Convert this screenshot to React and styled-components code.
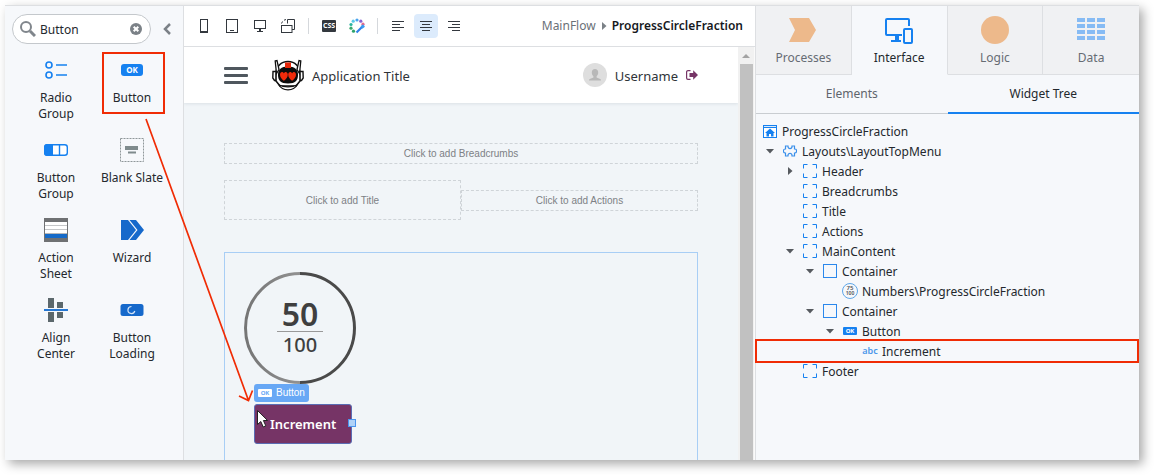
import React from "react";
import styled, { createGlobalStyle, css } from "styled-components";

const BLUE = "#1681f0";
const RED = "#f02c05";
const LINE = "#dddfe2";
const PANEL = "#f6f8fb";

const GlobalStyle = createGlobalStyle`
  *, *::before, *::after { box-sizing: border-box; }
  body {
    margin: 0;
    background: #fff;
    color: #24282d;
    font: 12px/16px "Noto Sans", sans-serif;
    overflow: hidden;
  }
  button, input { font: inherit; color: inherit; }
  button { margin: 0; padding: 0; border: 0; background: none; cursor: pointer; }
  svg { display: block; flex: none; }
`;

const Frame = styled.div`
  position: relative;
  display: flex;
  height: calc(100vh - 20px);
  margin: 5px 15px 15px 5px;
  border-top: 1px solid ${LINE};
  box-shadow: 4px 4px 10px rgba(0, 0, 0, 0.34);
`;

/* ---------- widget palette ---------- */

const Palette = styled.aside`
  flex: none;
  width: 179px;
  background: ${PANEL};
  border-right: 1px solid ${LINE};
`;

const SearchRow = styled.div`
  display: flex;
  align-items: center;
  gap: 12px;
  padding: 8px 7px;
`;

const SearchBox = styled.label`
  display: flex;
  align-items: center;
  gap: 4px;
  width: 139px;
  height: 30px;
  padding: 0 8px 0 7px;
  border: 1px solid #c4c8cc;
  border-radius: 15px;
  background: #fff;
`;

const SearchInput = styled.input`
  flex: 1;
  min-width: 0;
  padding: 2px 0 0;
  border: 0;
  outline: 0;
  background: none;
`;

const WidgetGrid = styled.div`
  display: grid;
  grid-template-columns: repeat(2, 76px);
  grid-auto-rows: 80px;
  padding: 0 13px;
`;

const Widget = styled.button`
  position: relative;
  display: flex;
  flex-direction: column;
  align-items: center;
  gap: 8px;
  padding-top: 6px;
`;

const WidgetIcon = styled.span`
  display: flex;
  align-items: center;
  justify-content: center;
  height: 24px;
`;

const WidgetLabel = styled.span`
  width: min-content;
  white-space: ${(p) => (p.$oneLine ? "nowrap" : "normal")};
`;

const WidgetMark = styled.span`
  position: absolute;
  inset: 0 5px 18px 8px;
  border: 2px solid ${RED};
`;

const OkBadge = styled.span`
  display: flex;
  align-items: center;
  justify-content: center;
  width: ${(p) => (p.$small ? 14 : 22)}px;
  height: ${(p) => (p.$small ? 8 : 12)}px;
  border-radius: ${(p) => (p.$small ? 1 : 3)}px;
  background: ${(p) => (p.$inverse ? "#fff" : BLUE)};
  color: ${(p) => (p.$inverse ? "#68a8f5" : "#fff")};
  font-family: "Noto Sans", sans-serif;
  font-size: ${(p) => (p.$small ? 6 : 8)}px;
  font-weight: 700;
  line-height: 8px;
`;

/* ---------- canvas ---------- */

const Center = styled.main`
  flex: 1;
  min-width: 0;
  display: flex;
  flex-direction: column;
  background: #fff;
`;

const Toolbar = styled.div`
  flex: none;
  display: flex;
  align-items: center;
  gap: 4px;
  height: 41px;
  padding: 0 12px 0 8px;
  border-bottom: 1px solid ${LINE};
`;

const ToolButton = styled.button`
  display: flex;
  align-items: center;
  justify-content: center;
  width: 24px;
  height: 24px;
  border-radius: 4px;
  background: ${(p) => (p.$active ? "#dcebfc" : "transparent")};
`;

const ToolDivider = styled.span`
  width: 1px;
  height: 16px;
  margin: 0 4px;
  background: #d5d8dc;
`;

const CssBadge = styled.span`
  width: 14px;
  height: 12px;
  border-radius: 1px;
  background: #33383e;
  color: #fff;
  font-size: 7px;
  font-weight: 700;
  line-height: 11px;
  text-align: center;
`;

const Crumbs = styled.nav`
  display: flex;
  align-items: center;
  gap: 5px;
  margin-left: auto;
  a { color: #6a7077; text-decoration: none; }
  strong { font-weight: 600; color: #16191d; }
`;

const Stage = styled.div`
  flex: 1;
  min-height: 0;
  display: flex;
`;

const Viewport = styled.div`
  flex: 1;
  min-width: 0;
  overflow: hidden;
  background: #f1f5f8;
`;

const ScrollTrack = styled.div`
  flex: none;
  display: flex;
  flex-direction: column;
  align-items: center;
  width: 17px;
  background: #f1f1f1;
  border-right: 1px solid #fafafa;
`;

const ScrollArrow = styled.button`
  display: flex;
  align-items: center;
  justify-content: center;
  width: 16px;
  height: 17px;
`;

const ScrollThumb = styled.div`
  flex: 1;
  width: 13px;
  background: #c1c1c1;
`;

const AppHeader = styled.header`
  position: relative;
  display: flex;
  align-items: center;
  height: 56px;
  padding: 0 40px;
  background: #fff;
  box-shadow: 0 1px 3px rgba(60, 80, 100, 0.12);
  font-size: 13px;
  color: #2f3439;
`;

const HeaderText = styled.span`
  padding-top: 2px;
`;

const Hamburger = styled.button`
  display: grid;
  gap: 4px;
  width: 24px;
  margin-right: 24px;
  span { height: 3px; border-radius: 1px; background: #4f575e; }
`;

const AppTitle = styled(HeaderText)`
  margin-left: 8px;
`;

const User = styled.div`
  display: flex;
  align-items: center;
  gap: 8px;
  margin-left: auto;
`;

const Page = styled.div`
  padding: 40px 40px 0;
  font: 10px/14px "Liberation Sans", Arial, sans-serif;
`;

const Placeholder = styled.div`
  display: flex;
  align-items: center;
  justify-content: center;
  height: ${(p) => (p.$tall ? 40 : 21)}px;
  padding-top: ${(p) => (p.$tall ? 2 : 1)}px;
  border: 1px dashed #cfd4d8;
  color: #7d8185;
`;

const TitleRow = styled.div`
  display: grid;
  grid-template-columns: 1fr 1fr;
  align-items: center;
  margin: 16px 0 32px;
`;

const MainContent = styled.div`
  display: flex;
  flex-direction: column;
  align-items: flex-start;
  height: 260px;
  padding: 19px;
  border: 1px solid #a8cef5;
`;

const Progress = styled.div`
  display: grid;
  place-items: center;
  width: 112px;
  height: 112px;
  > * { grid-area: 1 / 1; }
`;

const Fraction = styled.div`
  width: 46px;
  padding-top: 2px;
  color: #3f3f3f;
  font-family: "Noto Sans", sans-serif;
  text-align: center;
`;

const Numerator = styled.div`
  height: 32px;
  border-bottom: 1px solid #999;
  font-size: 32px;
  font-weight: 600;
  line-height: 28px;
`;

const Denominator = styled.div`
  font-size: 20px;
  font-weight: 500;
  line-height: 26px;
`;

const SelectionTag = styled.div`
  display: flex;
  align-items: center;
  gap: 4px;
  height: 18px;
  margin-left: 10px;
  padding: 0 4px;
  border-radius: 3px;
  background: #68a8f5;
  color: #fff;
`;

const IncrementButton = styled.button`
  position: relative;
  height: 40px;
  margin: 2px 0 0 10px;
  padding: 0 15px;
  border: 1px solid #5a6cb4;
  border-radius: 3px;
  background: #763466;
  color: #fff;
  font: 600 13px/18px "Noto Sans", sans-serif;
`;

const Handle = styled.span`
  position: absolute;
  top: 14px;
  right: -5px;
  width: 8px;
  height: 8px;
  border: 1px solid #4b95ee;
  background: #b0d2f8;
`;

const Pointer = styled.svg`
  position: absolute;
  top: 4px;
  left: 1px;
`;

/* ---------- inspector ---------- */

const Inspector = styled.aside`
  flex: none;
  width: 384px;
  border-left: 1px solid ${LINE};
  background: ${PANEL};
`;

const TabBar = styled.div`
  display: grid;
  grid-template-columns: repeat(4, 1fr);
`;

const Tab = styled.button`
  display: flex;
  flex-direction: column;
  align-items: center;
  gap: 6px;
  height: 69px;
  padding-top: 10px;
  border-right: 1px solid ${LINE};
  border-bottom: 1px solid ${LINE};
  background: #f0f1f3;
  color: #666c73;
  &:last-child { border-right: 0; }
  ${(p) =>
    p.$active &&
    css`
      background: ${PANEL};
      border-bottom-color: ${PANEL};
      color: #24282d;
    `}
`;

const SubTabs = styled.div`
  display: grid;
  grid-template-columns: 1fr 1fr;
`;

const SubTab = styled.button`
  height: 39px;
  border-bottom: ${(p) => (p.$active ? `2px solid ${BLUE}` : "1px solid #c9cdd1")};
  color: ${(p) => (p.$active ? "#24282d" : "#5f656c")};
`;

const Tree = styled.ul`
  margin: 0;
  padding: 7px 0 0;
  list-style: none;
`;

const TreeRow = styled.li`
  position: relative;
  display: flex;
  align-items: center;
  height: 20px;
  padding-left: ${(p) => (p.$depth ? p.$depth * 20 - 13 : 7)}px;
  white-space: nowrap;
  ${(p) =>
    p.$marked &&
    css`
      &::after {
        content: "";
        position: absolute;
        inset: -2px 0 -2px -1px;
        border: 2px solid ${RED};
      }
    `}
`;

const Toggle = styled.button`
  display: flex;
  align-items: center;
  justify-content: center;
  width: 14px;
  height: 20px;
  margin-right: 6px;
`;

const ToggleSpace = styled.span`
  width: 20px;
`;

const NodeIcon = styled.span`
  display: flex;
  align-items: center;
  justify-content: center;
  width: 14px;
  margin-right: 5px;
`;

const NodeLabel = styled.span`
  padding-top: 2px;
`;

const TextGlyph = styled.span`
  color: #4b97ea;
  font-size: 9px;
  font-weight: 600;
`;

const Annotation = styled.svg`
  position: absolute;
  top: 0;
  left: 0;
  pointer-events: none;
`;

/* ---------- drawings ---------- */

const icon = (w, h, children, extra) => (
  <svg width={w} height={h} viewBox={`0 0 ${w} ${h}`} fill="none" aria-hidden="true" {...extra}>
    {children}
  </svg>
);

const SearchIcon = () =>
  icon(16, 16, <g stroke="#80868c">
    <circle cx="6" cy="6" r="5" strokeWidth="2" />
    <path d="M10 10l5 5" strokeWidth="3" />
  </g>);

const ClearIcon = () =>
  icon(12, 12, <>
    <circle cx="6" cy="6" r="6" fill="#7b8187" />
    <path d="M3.7 3.7l4.6 4.6M8.3 3.7L3.7 8.3" stroke="#fff" strokeWidth="2" />
  </>);

const RadioIcon = () =>
  icon(22, 18, <g stroke={BLUE}>
    <circle cx="4" cy="4" r="3" strokeWidth="1.6" />
    <circle cx="4" cy="14" r="3" strokeWidth="1.6" />
    <path d="M11 4h11M11 14h11" strokeWidth="1.6" />
  </g>);

const ButtonGroupIcon = () =>
  icon(24, 12, <>
    <rect x=".7" y=".7" width="22.6" height="10.6" rx="2.5" fill="#fff" stroke={BLUE} strokeWidth="1.4" />
    <path d="M3 0h6v12H3a3 3 0 01-3-3V3a3 3 0 013-3z" fill={BLUE} />
    <path d="M15.5 0v12" stroke={BLUE} strokeWidth="1.4" />
  </>);

const BlankSlateIcon = () =>
  icon(24, 24, <>
    <rect x=".5" y=".5" width="23" height="23" stroke="#8f9799" strokeDasharray="2 1" />
    <path d="M5 8h13v4H5z" fill="#7f8b8d" />
    <path d="M8 13.500h8v2H8z" fill="#7f8b8d" />
  </>);

const ActionSheetIcon = () =>
  icon(24, 24, <>
    <path d="M0 0h24v24H0z" fill="#6f7173" />
    <path d="M1 4h22v11.500H1z" fill="#fff" />
    <path d="M1 7.500h22M1 11.500h22" stroke="#c4c6c8" />
    <path d="M1 16h22v4H1z" fill="#156ac8" />
  </>);

const WizardIcon = () =>
  icon(24, 22, <>
    <path d="M1 1h7l8 10-8 10H1z" fill="#1669cb" />
    <path d="M9.500 1H16l8 10-8 10H9.500l8-10z" fill="#1669cb" />
  </>);

const AlignCenterIcon = () =>
  icon(24, 24, <>
    <path d="M4 0h6v24H4zM13 4h6v16h-6z" fill="#5c686c" />
    <path d="M0 10h24v4H0z" fill={PANEL} />
    <path d="M0 11h24v2H0z" fill="#2678d4" />
  </>);

const LoadingIcon = () =>
  icon(24, 12, <>
    <rect x=".5" width="23" height="12" rx="2.500" fill="#1669cb" />
    <path d="M12 2.500A3.500 3.500 0 1015.300 7" stroke="#d3e4f8" strokeWidth="1.200" transform="translate(-.5 0)" />
  </>);

const PhoneIcon = () =>
  icon(8, 14, <>
    <rect x=".5" y=".5" width="7" height="12.500" stroke="#33383e" />
    <path d="M0 12h8v2H0z" fill="#33383e" />
  </>);

const TabletIcon = () =>
  icon(12, 14, <>
    <rect x=".5" y=".5" width="11" height="13" stroke="#33383e" />
    <path d="M4 11.500h4" stroke="#33383e" />
  </>);

const DesktopIcon = () =>
  icon(12, 14, <g stroke="#33383e">
    <rect x=".5" y="1.500" width="11" height="8" />
    <path d="M6 9.500v3" strokeWidth="2" />
    <path d="M3 12.500h6" />
  </g>);

const DevicesIcon = () =>
  icon(14, 14, <g stroke="#33383e">
    <path d="M6.500 4.500V.5h7v10h-2.500" />
    <rect x=".5" y="6.500" width="10.500" height="7" />
    <path d="M.5 4.500l1-2M3 1.200l2-.7" />
  </g>);

const WHEEL = [
  [8, 2, "#4aa3ee"], [11.800, 3.200, "#8a63d2"], [14, 6.200, "#e46a8e"],
  [4.200, 3.200, "#59c7e8"], [2, 6.500, "#2ab4a0"], [2, 10.200, "#3aa96c"], [4.500, 13.200, "#2da36a"],
];

const ThemeIcon = () =>
  icon(16, 16, <>
    {WHEEL.map(([x, y, c]) => <circle key={c} cx={x} cy={y} r="1.600" fill={c} />)}
    <path d="M7.500 14.500l6-6" stroke="#2f80e8" strokeWidth="2.200" />
    <path d="M12.500 9.500l2.500-2" stroke="#3b9bf2" strokeWidth="3" />
  </>);

const AlignIcon = ({ side }) => {
  const widths = [12, 8, 12, 8];
  return icon(12, 12, <g stroke="#33383e">
    {widths.map((w, i) => {
      const x = side === "left" ? 0 : side === "right" ? 12 - w : (12 - w) / 2;
      return <path key={i} d={`M${x} ${i * 3 + 1.5}h${w}`} />;
    })}
  </g>);
};

const RobotLogo = () =>
  icon(32, 32, <>
    <path d="M1 12.500h4v9H2.500L.8 19zM31 12.500h-4v9h2.500l1.700-2.500z" fill="#fff" stroke="#111" strokeWidth="1.400" />
    <path d="M16 2.500C9 2.500 4 7.500 4 15v7l4 5h16l4-5v-7C28 7.500 23 2.500 16 2.500z" fill="#fff" stroke="#111" strokeWidth="1.600" />
    <path d="M3.200 2l1.800-.5 2 9-2.500 4zM28.800 2L27 1.500l-2 9 2.500 4z" fill="#fff" stroke="#111" strokeWidth="1.300" />
    <path d="M16 7.500c-7 0-10 3-10 8.500 0 5 2.500 8.500 10 8.500S26 21 26 16c0-5.500-3-8.500-10-8.500z" fill="#0c0c0c" />
    <path d="M13 3.500h6V9h-6z" fill="#e8280a" />
    <path d="M8 15.700c0-3.300 3.200-3.300 3.900-1.200.7-2.100 3.900-2.100 3.900 1.200 0 2.800-2.200 4.600-3.900 6.100-1.700-1.500-3.900-3.300-3.900-6.100z" fill="#f12b0b" />
    <path d="M16.200 15.700c0-3.300 3.200-3.300 3.900-1.200.7-2.100 3.900-2.100 3.900 1.200 0 2.800-2.200 4.600-3.900 6.100-1.700-1.500-3.900-3.300-3.900-6.100z" fill="#f12b0b" />
    <path d="M7 26c1.500 3 5 4.800 9 4.800s7.500-1.800 9-4.800c-2.500 1.300-5.500 1.800-9 1.800S9.500 27.300 7 26z" fill="#fff" stroke="#111" strokeWidth="1.200" />
  </>);

const AvatarIcon = () =>
  icon(24, 24, <>
    <circle cx="12" cy="12" r="12" fill="#dedede" />
    <path d="M12 6c-2 0-3.200 1.500-3.200 3.500 0 1.600.7 3 1.600 3.700v1.300L6.800 16c-.6.300-.8.800-.8 1.500h12c0-.7-.2-1.200-.8-1.500l-3.600-1.500v-1.300c.9-.7 1.600-2.100 1.600-3.700C15.200 7.500 14 6 12 6z" fill="#b8b8b8" />
  </>);

const LogoutIcon = () =>
  icon(12, 10, <>
    <path d="M4.500.6H2A1.400 1.400 0 00.6 2v6A1.400 1.400 0 002 9.400h2.500" stroke="#763466" strokeWidth="1.200" />
    <path d="M3.500 3h3.700V.2L12 5 7.200 9.800V7H3.500z" fill="#763466" />
  </>);

const ProgressRing = () =>
  icon(112, 112, <>
    <defs>
      <linearGradient id="ring" x1="0" y1="0" x2="1" y2="0">
        <stop offset="0" stopColor="#757575" />
        <stop offset="1" stopColor="#929292" />
      </linearGradient>
    </defs>
    <path d="M56 1.500a54.500 54.500 0 000 109" stroke="url(#ring)" strokeWidth="3" />
    <path d="M56 1.500a54.500 54.500 0 010 109" stroke="#4a4a4a" strokeWidth="3" />
  </>);

const ProcessesIcon = () =>
  icon(28, 28, <path d="M0 2h20l7 12-7 12H0l6-12z" fill="#edb98b" />);

const InterfaceIcon = () =>
  icon(28, 28, <g stroke={BLUE} strokeWidth="2">
    <path d="M17 19H2a1 1 0 01-1-1V4a1 1 0 011-1h21a1 1 0 011 1v6" />
    <rect x="19" y="13" width="8" height="14" rx="1" />
    <path d="M12 19v5" strokeWidth="4" />
    <path d="M6 25h10" />
  </g>);

const LogicIcon = () => icon(28, 28, <circle cx="14" cy="14" r="14" fill="#edb98b" />);

const DataIcon = () =>
  icon(28, 28, <g fill="#86bbf4">
    {[2, 8, 14, 20].map((y) =>
      [0, 10, 20].map((x) => <rect key={`${x}-${y}`} x={x} y={y} width="8" height="4" />)
    )}
  </g>);

const ScreenIcon = () =>
  icon(14, 13, <>
    <path d="M0 0h14v13H0z" fill={BLUE} />
    <path d="M1 1h12v1H1z" fill="#dcebfc" />
    <path d="M1 3h12v9H1z" fill="#fff" />
    <path d="M7 3.500l5 4.500h-1.500v3.500H8V9H6v2.500H3.500V8H2z" fill={BLUE} />
  </>);

const BlockIcon = () =>
  icon(14, 12, <path d="M2.500 1H5v.6a2 2 0 004 0V1h2.500v3h.3a1.800 2 0 010 4h-.3v3H9v-.6a2 2 0 00-4 0v.6H2.500V8h-.3a1.800 2 0 010-4h.3z" stroke="#3a8fea" strokeWidth="1.200" />);

const PlaceholderIcon = () =>
  icon(14, 14, <path d="M.5 4.500v-4h4M9.500.5h4v4M13.500 9.500v4h-4M4.500 13.500h-4v-4" stroke={BLUE} />);

const ContainerIcon = () =>
  icon(14, 14, <rect x=".5" y=".5" width="13" height="13" stroke="#2b88ec" />);

const FractionBadge = styled.span`
  flex: none;
  display: grid;
  place-content: center;
  width: 16px;
  height: 16px;
  border: 1px solid #5ea6e8;
  border-radius: 50%;
  color: #4c5156;
  font-size: 6px;
  font-weight: 600;
  line-height: 5px;
  text-align: center;
  small { font-size: 5px; line-height: 5px; }
`;

const Triangle = ({ open }) =>
  icon(8, 8, <path d={open ? "M0 2h8L4 6.500z" : "M2 0v8l4.500-4z"} fill="#565a5f" />);

/* ---------- data ---------- */

const WIDGETS = [
  { label: "Radio Group", icon: <RadioIcon /> },
  { label: "Button", icon: <OkBadge>OK</OkBadge>, marked: true },
  { label: "Button Group", icon: <ButtonGroupIcon /> },
  { label: "Blank Slate", icon: <BlankSlateIcon />, oneLine: true },
  { label: "Action Sheet", icon: <ActionSheetIcon /> },
  { label: "Wizard", icon: <WizardIcon /> },
  { label: "Align Center", icon: <AlignCenterIcon /> },
  { label: "Button Loading", icon: <LoadingIcon /> },
];

const TABS = [
  { label: "Processes", icon: <ProcessesIcon /> },
  { label: "Interface", icon: <InterfaceIcon />, active: true },
  { label: "Logic", icon: <LogicIcon /> },
  { label: "Data", icon: <DataIcon /> },
];

const NODES = [
  { depth: 0, label: "ProgressCircleFraction", icon: <ScreenIcon /> },
  { depth: 1, label: "Layouts\\LayoutTopMenu", icon: <BlockIcon />, toggle: "open" },
  { depth: 2, label: "Header", icon: <PlaceholderIcon />, toggle: "closed" },
  { depth: 2, label: "Breadcrumbs", icon: <PlaceholderIcon /> },
  { depth: 2, label: "Title", icon: <PlaceholderIcon /> },
  { depth: 2, label: "Actions", icon: <PlaceholderIcon /> },
  { depth: 2, label: "MainContent", icon: <PlaceholderIcon />, toggle: "open" },
  { depth: 3, label: "Container", icon: <ContainerIcon />, toggle: "open" },
  { depth: 4, label: "Numbers\\ProgressCircleFraction", icon: <FractionBadge>75<small>100</small></FractionBadge> },
  { depth: 3, label: "Container", icon: <ContainerIcon />, toggle: "open" },
  { depth: 4, label: "Button", icon: <OkBadge $small>OK</OkBadge>, toggle: "open" },
  { depth: 5, label: "Increment", icon: <TextGlyph>abc</TextGlyph>, marked: true },
  { depth: 2, label: "Footer", icon: <PlaceholderIcon /> },
];

export default function App() {
  return (
    <>
      <GlobalStyle />
      <Frame>
        <Palette>
          <SearchRow>
            <SearchBox>
              <SearchIcon />
              <SearchInput type="text" aria-label="Search widgets" defaultValue="Button" />
              <button type="button" aria-label="Clear search"><ClearIcon /></button>
            </SearchBox>
            <button type="button" aria-label="Collapse panel">
              {icon(8, 12, <path d="M7 1L2 6l5 5" stroke="#7b8187" strokeWidth="2.500" />)}
            </button>
          </SearchRow>
          <WidgetGrid>
            {WIDGETS.map((w) => (
              <Widget key={w.label} type="button">
                <WidgetIcon>{w.icon}</WidgetIcon>
                <WidgetLabel $oneLine={w.oneLine}>{w.label}</WidgetLabel>
                {w.marked && <WidgetMark />}
              </Widget>
            ))}
          </WidgetGrid>
        </Palette>

        <Center>
          <Toolbar>
            <ToolButton aria-label="Phone"><PhoneIcon /></ToolButton>
            <ToolButton aria-label="Tablet"><TabletIcon /></ToolButton>
            <ToolButton aria-label="Desktop"><DesktopIcon /></ToolButton>
            <ToolButton aria-label="Rotate device"><DevicesIcon /></ToolButton>
            <ToolDivider />
            <ToolButton><CssBadge>CSS</CssBadge></ToolButton>
            <ToolButton aria-label="Theme"><ThemeIcon /></ToolButton>
            <ToolDivider />
            <ToolButton aria-label="Align left"><AlignIcon side="left" /></ToolButton>
            <ToolButton aria-label="Align center" $active><AlignIcon side="center" /></ToolButton>
            <ToolButton aria-label="Align right"><AlignIcon side="right" /></ToolButton>
            <Crumbs>
              <a href="#mainflow">MainFlow</a>
              {icon(6, 8, <path d="M1 0v8l4.500-4z" fill="#7b8187" />)}
              <strong>ProgressCircleFraction</strong>
            </Crumbs>
          </Toolbar>

          <Stage>
            <Viewport>
              <AppHeader>
                <Hamburger aria-label="Menu"><span /><span /><span /></Hamburger>
                <RobotLogo />
                <AppTitle>Application Title</AppTitle>
                <User>
                  <AvatarIcon />
                  <HeaderText>Username</HeaderText>
                  <LogoutIcon />
                </User>
              </AppHeader>
              <Page>
                <Placeholder>Click to add Breadcrumbs</Placeholder>
                <TitleRow>
                  <Placeholder $tall>Click to add Title</Placeholder>
                  <Placeholder>Click to add Actions</Placeholder>
                </TitleRow>
                <MainContent>
                  <Progress>
                    <ProgressRing />
                    <Fraction>
                      <Numerator>50</Numerator>
                      <Denominator>100</Denominator>
                    </Fraction>
                  </Progress>
                  <SelectionTag><OkBadge $small $inverse>OK</OkBadge>Button</SelectionTag>
                  <IncrementButton type="button">
                    Increment
                    <Handle />
                    <Pointer width="13" height="20" viewBox="0 0 13 20" aria-hidden="true">
                      <path d="M1.500 1.500v14l3.300-3 2.400 5.500 2.600-1.200-2.400-5.300h4.200z" fill="#fff" stroke="#222" />
                    </Pointer>
                  </IncrementButton>
                </MainContent>
              </Page>
            </Viewport>
            <ScrollTrack>
              <ScrollArrow aria-label="Scroll up">
                {icon(8, 4, <path d="M0 4h8L4 0z" fill="#a3a3a3" />)}
              </ScrollArrow>
              <ScrollThumb />
            </ScrollTrack>
          </Stage>
        </Center>

        <Inspector>
          <TabBar role="tablist">
            {TABS.map((t) => (
              <Tab key={t.label} role="tab" aria-selected={!!t.active} $active={t.active}>
                {t.icon}
                {t.label}
              </Tab>
            ))}
          </TabBar>
          <SubTabs role="tablist">
            <SubTab role="tab" aria-selected="false">Elements</SubTab>
            <SubTab role="tab" aria-selected="true" $active>Widget Tree</SubTab>
          </SubTabs>
          <Tree>
            {NODES.map((n, i) => (
              <TreeRow key={i} $depth={n.depth} $marked={n.marked}>
                {n.depth > 0 &&
                  (n.toggle ? (
                    <Toggle aria-label={`Toggle ${n.label}`} aria-expanded={n.toggle === "open"}>
                      <Triangle open={n.toggle === "open"} />
                    </Toggle>
                  ) : (
                    <ToggleSpace />
                  ))}
                <NodeIcon>{n.icon}</NodeIcon>
                <NodeLabel>{n.label}</NodeLabel>
              </TreeRow>
            ))}
          </Tree>
        </Inspector>

        <Annotation width="260" height="410" viewBox="0 0 260 410" fill="none" aria-hidden="true">
          <path d="M141 113L243.500 394.500M234 390l9.500 4.500 4-10" stroke={RED} strokeWidth="1.700" />
        </Annotation>
      </Frame>
    </>
  );
}
